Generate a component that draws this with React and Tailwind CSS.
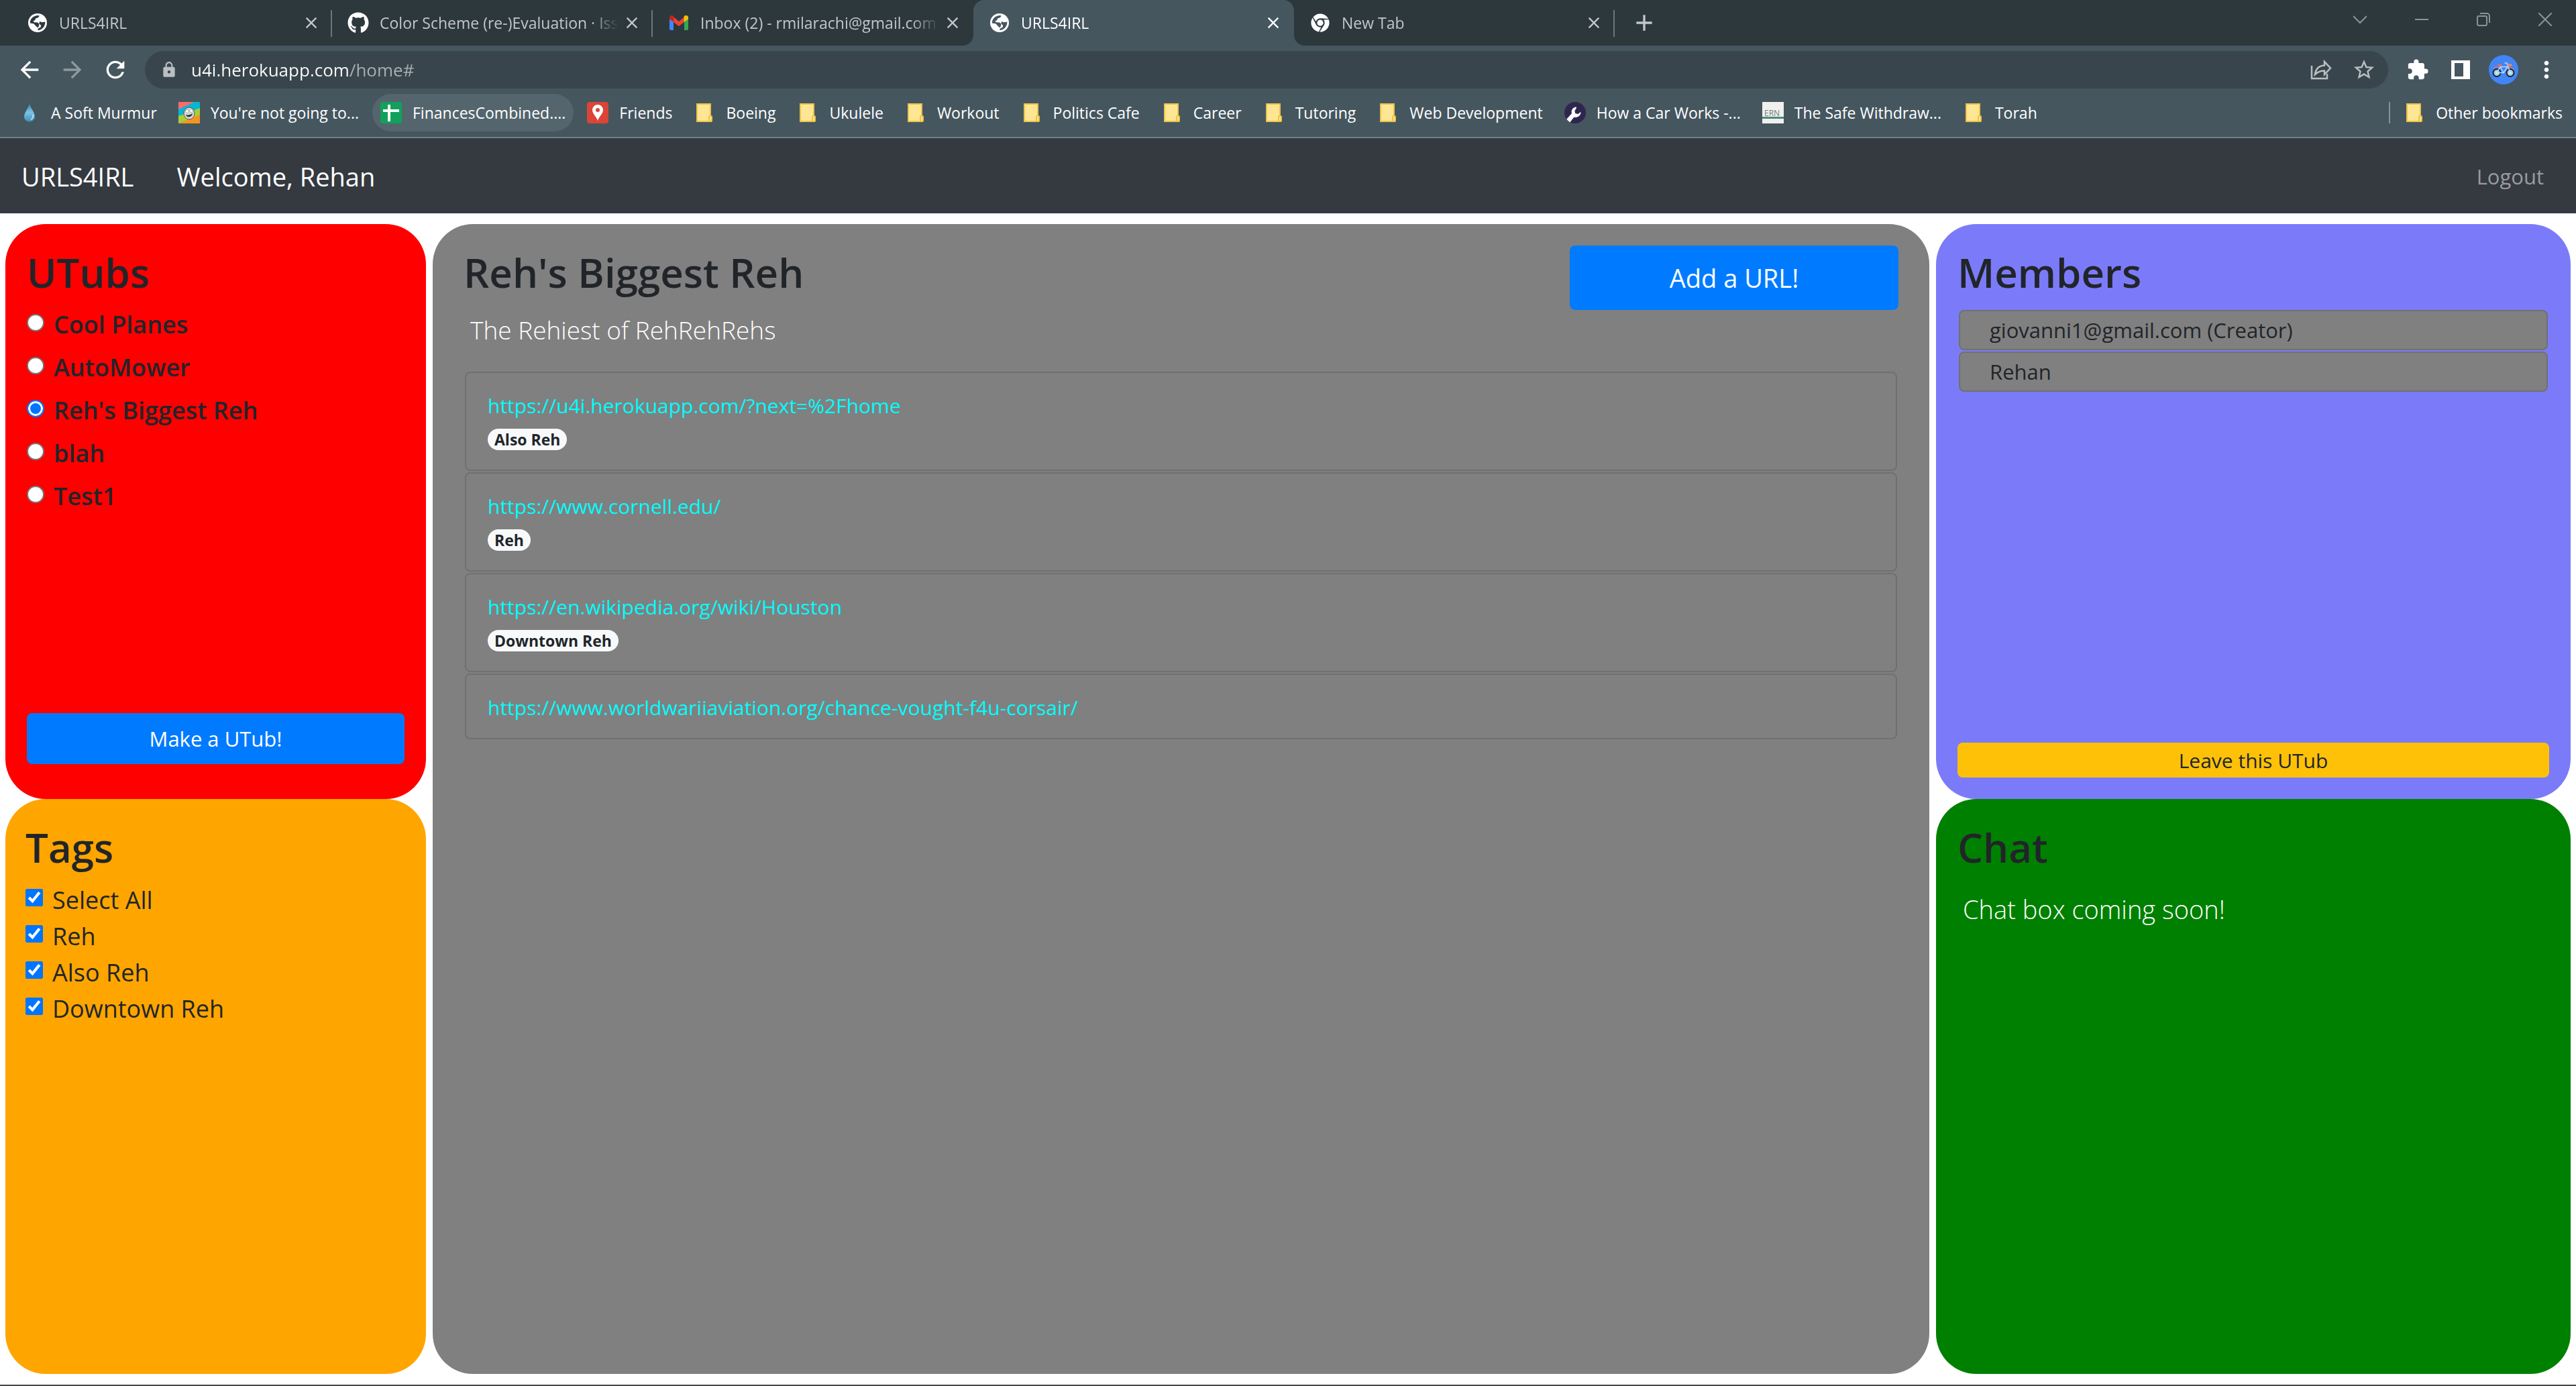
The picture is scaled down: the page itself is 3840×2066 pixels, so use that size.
import React, { useState } from "react";
import {
  MdArrowBack,
  MdArrowForward,
  MdRefresh,
  MdLock,
  MdStarBorder,
  MdExtension,
  MdMoreVert,
  MdClose,
  MdAdd,
} from "react-icons/md";
import { FaGithub, FaChrome } from "react-icons/fa";

/* ---------- favicons and small drawings ---------- */

function GlobeIcon() {
  return (
    <svg viewBox="0 0 28 28" className="size-7" aria-hidden="true">
      <defs>
        <mask id="globe-land">
          <circle cx="14" cy="14" r="14" fill="#fff" />
          <path d="M2.8 14.4C2.8 8 7.6 3.6 13.6 2.9L17 3.6 14.8 6.2 11 7.4 10.4 10 7.4 11.4 9 13.2 14 13.4 16.2 15.6 16 19 11.4 18.6 8.2 15.2Z" fill="#000" />
          <path d="M25.4 12.6C25.6 19.6 20.6 24.8 14.4 25.3L14.6 22.8 18.8 20.6 19 17.4 16.2 15.4 17.2 12 20.6 13.2Z" fill="#000" />
          <path d="M10.4 17.8L16 18.6 14.4 21.6Z" fill="#000" />
        </mask>
      </defs>
      <rect width="28" height="28" fill="#fff" mask="url(#globe-land)" />
    </svg>
  );
}

function GmailIcon() {
  return (
    <svg viewBox="0 0 28 22" className="w-7" aria-hidden="true">
      <path d="M0 4v16a2 2 0 0 0 2 2h4V8z" fill="#4285f4" />
      <path d="M28 4v16a2 2 0 0 1-2 2h-4V8z" fill="#34a853" />
      <path d="M6 2.2L14 9l8-6.8V10l-8 6-8-6z" fill="#ea4335" />
      <path d="M0 3.2C0 .2 3.4-1 5.6.8L6.4 1.4V10L0 5.4z" fill="#c5221f" />
      <path d="M28 3.2C28 .2 24.6-1 22.4.8L21.6 1.4V10L28 5.4z" fill="#fbbc04" />
    </svg>
  );
}

function FolderIcon() {
  return (
    <svg viewBox="0 0 32 32" className="size-8" aria-hidden="true">
      <rect x="5" y="3" width="20" height="26" fill="#ffe694" stroke="#ecc346" strokeWidth="2" />
      <rect x="23" y="21" width="4" height="8" rx="1" fill="#ffe694" stroke="#ecc346" strokeWidth="2" />
    </svg>
  );
}

function DropIcon() {
  return (
    <svg viewBox="0 0 32 32" className="size-8" aria-hidden="true">
      <defs>
        <linearGradient id="drop" x1="0" y1="0" x2="0" y2="1">
          <stop offset="0" stopColor="#3f7fa3" />
          <stop offset="0.5" stopColor="#7cc4e6" />
          <stop offset="1" stopColor="#3d8fba" />
        </linearGradient>
      </defs>
      <path d="M16 2c1 7 8 13 8 20a8 7.5 0 0 1-16 0C8 15 15 9 16 2z" fill="url(#drop)" />
      <path d="M21 19c.8 3-.6 6-3 7" stroke="#d8f0fa" strokeWidth="1.5" fill="none" />
    </svg>
  );
}

function StripesIcon() {
  return (
    <svg viewBox="0 0 32 32" className="size-8" aria-hidden="true">
      <rect width="32" height="32" fill="#00b8d4" />
      <path d="M0 0h24L0 11z" fill="#ff6b6b" />
      <path d="M0 21L32 9v11L0 32z" fill="#a6ce39" />
      <path d="M0 32L32 19v13z" fill="#f7941d" />
      <ellipse cx="16" cy="17" rx="8" ry="9" fill="#d9d9d9" stroke="#555" strokeWidth="1" />
      <circle cx="13" cy="14" r="2.5" fill="#fff" stroke="#888" strokeWidth=".7" />
      <circle cx="19" cy="13" r="2.5" fill="#fff" stroke="#888" strokeWidth=".7" />
      <path d="M11 19c4 1 7 0 10-2 0 5-8 8-10 2z" fill="#333" />
    </svg>
  );
}

function SheetsIcon() {
  return (
    <svg viewBox="0 0 32 32" className="size-8" aria-hidden="true">
      <rect width="32" height="32" rx="3" fill="#12a05c" />
      <path d="M11 4h4v7h13v4H15v14h-4V15H4v-4h7z" fill="#fff" />
    </svg>
  );
}

function PinIcon() {
  return (
    <svg viewBox="0 0 32 32" className="size-8" aria-hidden="true">
      <rect width="32" height="32" rx="4" fill="#db4437" />
      <path d="M16 4a8 8 0 0 0-8 8c0 6 6 9 8 16 2-7 8-10 8-16a8 8 0 0 0-8-8z" fill="#fff" />
      <circle cx="16" cy="12" r="3" fill="#db4437" />
    </svg>
  );
}

function WrenchIcon() {
  return (
    <svg viewBox="0 0 32 32" className="size-8" aria-hidden="true">
      <circle cx="16" cy="16" r="16" fill="#2f2650" />
      <path d="M17.500 7.500c-5 .5-8 5-6.500 9.500l-7.600 8.600c1.400 2 3 3.400 5 4.600l5.800-7.400c5 1.200 9.800-1.800 10.400-7.200l-1-.3-3 2.800-4.400-1-.8-3.800 2.700-4.600z" fill="#fff" />
    </svg>
  );
}

function ErnIcon() {
  return (
    <svg viewBox="0 0 32 32" className="size-8" aria-hidden="true">
      <rect width="32" height="32" fill="#f1f0ee" />
      <rect y="22" width="32" height="3" fill="#4d8a80" />
      <text x="3" y="21" fontSize="12" fill="#6f7f7c" fontFamily="Open Sans, sans-serif">ERN</text>
    </svg>
  );
}

function ShareIcon() {
  return (
    <svg viewBox="0 0 40 40" className="size-10" fill="none" stroke="currentColor" strokeWidth="2.5" aria-hidden="true">
      <path d="M6 14v19h23v-7" />
      <path d="M11 27c1-9 6-13 14-13.5V8l9 9.5-9 9.5v-5.500c-6 0-10 1.500-14 5.500z" />
    </svg>
  );
}

function SidePanelIcon() {
  return (
    <svg viewBox="0 0 40 40" className="size-10" fill="currentColor" aria-hidden="true">
      <path fillRule="evenodd" d="M6 6h28v28H6zM11 10v20h13V10z" />
    </svg>
  );
}

function BicycleAvatar() {
  return (
    <svg viewBox="0 0 44 44" className="size-11" fill="none" aria-hidden="true">
      <circle cx="22" cy="22" r="22" fill="#4285f4" />
      <path d="M6 20a8 8 0 0 1 10 0M28 20a8 8 0 0 1 10 2" stroke="#f0705a" strokeWidth="1.500" />
      <circle cx="12" cy="26.500" r="5.500" fill="#9fd0ee" stroke="#1f2430" strokeWidth="2" />
      <circle cx="32" cy="26.500" r="5.500" fill="#9fd0ee" stroke="#1f2430" strokeWidth="2" />
      <circle cx="12" cy="26.500" r="2" fill="#d8f5d0" />
      <circle cx="32" cy="26.500" r="2" fill="#d8f5d0" />
      <path d="M12 26.500l5-9 5 9H12M22 26.500l6-9H17M32 26.500L27 12h-3.500" stroke="#b5dcfa" strokeWidth="1.500" />
      <path d="M13 15h6" stroke="#ef6c57" strokeWidth="2.500" />
      <path d="M28 15h6" stroke="#ef8c67" strokeWidth="3.500" />
    </svg>
  );
}

/* ---------- browser window ---------- */

const tabs = [
  { title: "URLS4IRL", icon: <GlobeIcon /> },
  { title: "Color Scheme (re-)Evaluation · Iss", icon: <FaGithub className="size-8 text-white" /> },
  { title: "Inbox (2) - rmilarachi@gmail.com", icon: <GmailIcon />, last: true },
  { title: "URLS4IRL", icon: <GlobeIcon />, active: true },
  { title: "New Tab", icon: <FaChrome className="size-7 text-white" /> },
];

function Flare({ className }) {
  return (
    <svg viewBox="0 0 16 16" className={className} aria-hidden="true">
      <path d="M16 0v16H0A16 16 0 0 0 16 0z" fill="#45565f" />
    </svg>
  );
}

function Tab({ title, icon, active, last }) {
  return (
    <div
      className={
        "relative flex h-[68px] w-[478px] items-center px-[23px] " +
        (active ? "rounded-t-2xl bg-[#45565f] text-white" : "text-[#c3c7c9]")
      }
    >
      {active && <Flare className="absolute bottom-0 -left-4 size-4" />}
      {active && <Flare className="absolute -right-4 bottom-0 size-4 -scale-x-100" />}
      <span className="flex size-8 shrink-0 items-center justify-center">{icon}</span>
      <span className="mr-3 ml-4 min-w-0 flex-1 overflow-hidden text-[23px] leading-8 whitespace-nowrap [mask-image:linear-gradient(to_right,#000_88%,transparent)]">
        {title}
      </span>
      <button type="button" aria-label={"Close " + title} className="flex size-4 shrink-0 items-center justify-center">
        <MdClose className="size-7 shrink-0" />
      </button>
      {!active && !last && <span className="absolute top-[15px] right-0 h-10 w-0.5 bg-[#6c777b]" />}
    </div>
  );
}

function WindowButton({ label, children }) {
  return (
    <button type="button" aria-label={label} className="flex h-[58px] w-[92px] items-center justify-center text-[#8b9396]">
      <svg viewBox="0 0 20 20" className="size-5" fill="none" stroke="currentColor" strokeWidth="2" aria-hidden="true">
        {children}
      </svg>
    </button>
  );
}

const bookmarks = [
  { title: "A Soft Murmur", icon: <DropIcon /> },
  { title: "You're not going to...", icon: <StripesIcon /> },
  { title: "FinancesCombined....", icon: <SheetsIcon />, hover: true },
  { title: "Friends", icon: <PinIcon /> },
  { title: "Boeing" },
  { title: "Ukulele" },
  { title: "Workout" },
  { title: "Politics Cafe" },
  { title: "Career" },
  { title: "Tutoring" },
  { title: "Web Development" },
  { title: "How a Car Works -...", icon: <WrenchIcon /> },
  { title: "The Safe Withdraw...", icon: <ErnIcon /> },
  { title: "Torah" },
];

function Bookmark({ title, icon, hover }) {
  return (
    <a
      href="#"
      className={
        "flex h-14 items-center gap-4 rounded-full px-3 text-[23px] whitespace-nowrap text-white " +
        (hover ? "bg-[#54656d]" : "")
      }
    >
      {icon || <FolderIcon />}
      <span>{title}</span>
    </a>
  );
}

function BrowserChrome() {
  return (
    <header className="border-b-2 border-[#6f7f86] bg-[#45565f]">
      <div className="flex items-start bg-[#2d383d]">
        <div className="flex min-w-0 pl-[17px]">
          {tabs.map((t, i) => (
            <Tab key={i} {...t} />
          ))}
        </div>
        <button type="button" aria-label="New tab" className="ml-6 flex h-[68px] w-10 items-center justify-center text-[#c3c7c9]">
          <MdAdd className="size-10 shrink-0" />
        </button>
        <div className="ml-auto flex">
          <WindowButton label="Search tabs"><path d="M0 5l10 10L20 5" /></WindowButton>
          <WindowButton label="Minimize"><path d="M0 10h20" /></WindowButton>
          <WindowButton label="Restore">
            <rect x="1" y="5" width="14" height="14" rx="2" />
            <path d="M5 1h10a4 4 0 0 1 4 4v10" />
          </WindowButton>
          <WindowButton label="Close window"><path d="M0 0l20 20M20 0L0 20" /></WindowButton>
        </div>
      </div>

      <div className="flex items-center gap-6 px-6 pt-2 text-white">
        <button type="button" aria-label="Back"><MdArrowBack className="size-10" /></button>
        <button type="button" aria-label="Forward" className="text-[#8f9a9f]"><MdArrowForward className="size-10" /></button>
        <button type="button" aria-label="Reload"><MdRefresh className="size-10" /></button>
        <div className="flex h-14 flex-1 items-center gap-6 rounded-full bg-[#39454c] pr-4 pl-[23px] text-[#b9bfc2]">
          <MdLock className="size-[26px]" />
          <input
            type="text"
            aria-label="Address"
            defaultValue="u4i.herokuapp.com/home#"
            className="-ml-1 h-10 min-w-0 flex-1 bg-[linear-gradient(to_right,#fff_237px,#a9b0b3_237px)] bg-clip-text text-[26px] text-transparent outline-none"
          />
          <button type="button" aria-label="Share this page"><ShareIcon /></button>
          <button type="button" aria-label="Bookmark this tab" className="flex size-10 items-center justify-center"><MdStarBorder className="size-9" /></button>
        </div>
        <button type="button" aria-label="Extensions" className="flex size-10 items-center justify-center"><MdExtension className="size-[34px]" /></button>
        <button type="button" aria-label="Side panel"><SidePanelIcon /></button>
        <button type="button" aria-label="Profile" className="-mx-0.5"><BicycleAvatar /></button>
        <button type="button" aria-label="Menu"><MdMoreVert className="size-10" /></button>
      </div>

      <nav aria-label="Bookmarks" className="flex items-center gap-2 py-2 pr-2 pl-4">
        {bookmarks.map((b) => (
          <Bookmark key={b.title} {...b} />
        ))}
        <span className="ml-auto h-8 w-0.5 bg-[#83919a]" />
        <Bookmark title="Other bookmarks" />
      </nav>
    </header>
  );
}

/* ---------- application ---------- */

const utubs = ["Cool Planes", "AutoMower", "Reh's Biggest Reh", "blah", "Test1"];
const tags = ["Select All", "Reh", "Also Reh", "Downtown Reh"];
const urls = [
  { href: "https://u4i.herokuapp.com/?next=%2Fhome", tags: ["Also Reh"] },
  { href: "https://www.cornell.edu/", tags: ["Reh"] },
  { href: "https://en.wikipedia.org/wiki/Houston", tags: ["Downtown Reh"] },
  { href: "https://www.worldwariiaviation.org/chance-vought-f4u-corsair/", tags: [] },
];
const members = ["giovanni1@gmail.com (Creator)", "Rehan"];

function Heading({ children }) {
  return <h2 className="text-[60px] leading-[80px] font-semibold text-[#212529]">{children}</h2>;
}

function UTubs({ selected, onSelect }) {
  return (
    <section className="flex flex-col rounded-[60px] bg-[#ff0000] px-8 pt-8">
      <Heading>UTubs</Heading>
      <div className="mt-1.5">
        {utubs.map((name) => (
          <label key={name} className="flex h-16 items-center gap-3.5 text-[36px] font-semibold">
            <input
              type="radio"
              name="utub"
              checked={selected === name}
              onChange={() => onSelect(name)}
              className="mb-1.5 size-[26px] appearance-none rounded-full border-2 border-[#767676] bg-white checked:border-[#0075ff] checked:bg-[#0075ff] checked:shadow-[inset_0_0_0_3px_#fff]"
            />
            {name}
          </label>
        ))}
      </div>
      <button type="button" className="mt-auto mb-[52px] h-[76px] rounded-lg bg-[#007bff] text-[31px] text-white">
        Make a UTub!
      </button>
    </section>
  );
}

function Tags() {
  return (
    <section className="rounded-[60px] bg-[#ffa500] px-[30px] pt-8">
      <Heading>Tags</Heading>
      <div className="mt-3">
        {tags.map((name) => (
          <label key={name} className="flex h-[54px] items-center gap-3.5 text-[36px]">
            <input type="checkbox" defaultChecked className="mb-2 size-[26px] accent-[#0075ff]" />
            {name}
          </label>
        ))}
      </div>
    </section>
  );
}

function Urls({ title }) {
  return (
    <section className="rounded-[60px] bg-[#808080] px-[46px] pt-8">
      <div className="flex items-start justify-between">
        <div>
          <Heading>{title}</Heading>
          <p className="mt-4 pl-2.5 text-[37px] leading-[60px] font-light text-white">The Rehiest of RehRehRehs</p>
        </div>
        <button type="button" className="h-24 w-[490px] rounded-lg bg-[#007bff] text-[38px] text-white">
          Add a URL!
        </button>
      </div>
      <ul className="mx-0.5 mt-8 flex flex-col gap-0.5">
        {urls.map((u) => (
          <li key={u.href} className="rounded-lg border-2 border-[#707070] px-8 pt-[25px] pb-[21px]">
            <a href={u.href} className="block text-[30px] leading-[48px] text-[#00ffff]">{u.href}</a>
            {u.tags.length > 0 && (
              <div className="flex gap-2 pt-2.5 pb-2">
                {u.tags.map((t) => (
                  <span key={t} className="rounded-full bg-[#f8f9fa] px-2.5 text-[23px] leading-8 font-bold">{t}</span>
                ))}
              </div>
            )}
          </li>
        ))}
      </ul>
    </section>
  );
}

function Members() {
  return (
    <section className="flex flex-col rounded-[60px] bg-[#7b7bf9] px-8 pt-8 pb-8">
      <Heading>Members</Heading>
      <ul className="mx-0.5 mt-4 flex flex-col gap-0.5">
        {members.map((m) => (
          <li key={m} className="rounded-lg border-2 border-[#707070] bg-[#808080] px-11 text-[31px] leading-[56px]">{m}</li>
        ))}
      </ul>
      <button type="button" className="mt-auto h-[52px] rounded-lg bg-[#ffc107] text-[30px]">
        Leave this UTub
      </button>
    </section>
  );
}

function Chat() {
  return (
    <section className="rounded-[60px] bg-[#008000] px-8 pt-8">
      <Heading>Chat</Heading>
      <p className="mt-[22px] pl-2 text-[38px] leading-[60px] font-light text-white">Chat box coming soon!</p>
    </section>
  );
}

export default function App() {
  const [selected, setSelected] = useState("Reh's Biggest Reh");
  return (
    <div className="flex min-h-screen flex-col border-b-2 border-[#444446] bg-white font-['Open_Sans',sans-serif] text-[#212529]">
      <BrowserChrome />
      <nav aria-label="Main" className="flex h-28 items-center bg-[#343a40] pt-0.5 pr-12 pl-8 text-white">
        <a href="#" className="mr-16 text-[38px]">URLS4IRL</a>
        <span className="text-[38px]">Welcome, Rehan</span>
        <a href="#" className="ml-auto text-[31px] text-[#999c9f]">Logout</a>
      </nav>
      <main className="grid flex-1 grid-cols-[627fr_2231fr_946fr] gap-x-2.5 px-2 py-4">
        <div className="grid grid-rows-2">
          <UTubs selected={selected} onSelect={setSelected} />
          <Tags />
        </div>
        <Urls title={selected} />
        <div className="grid grid-rows-2">
          <Members />
          <Chat />
        </div>
      </main>
    </div>
  );
}
